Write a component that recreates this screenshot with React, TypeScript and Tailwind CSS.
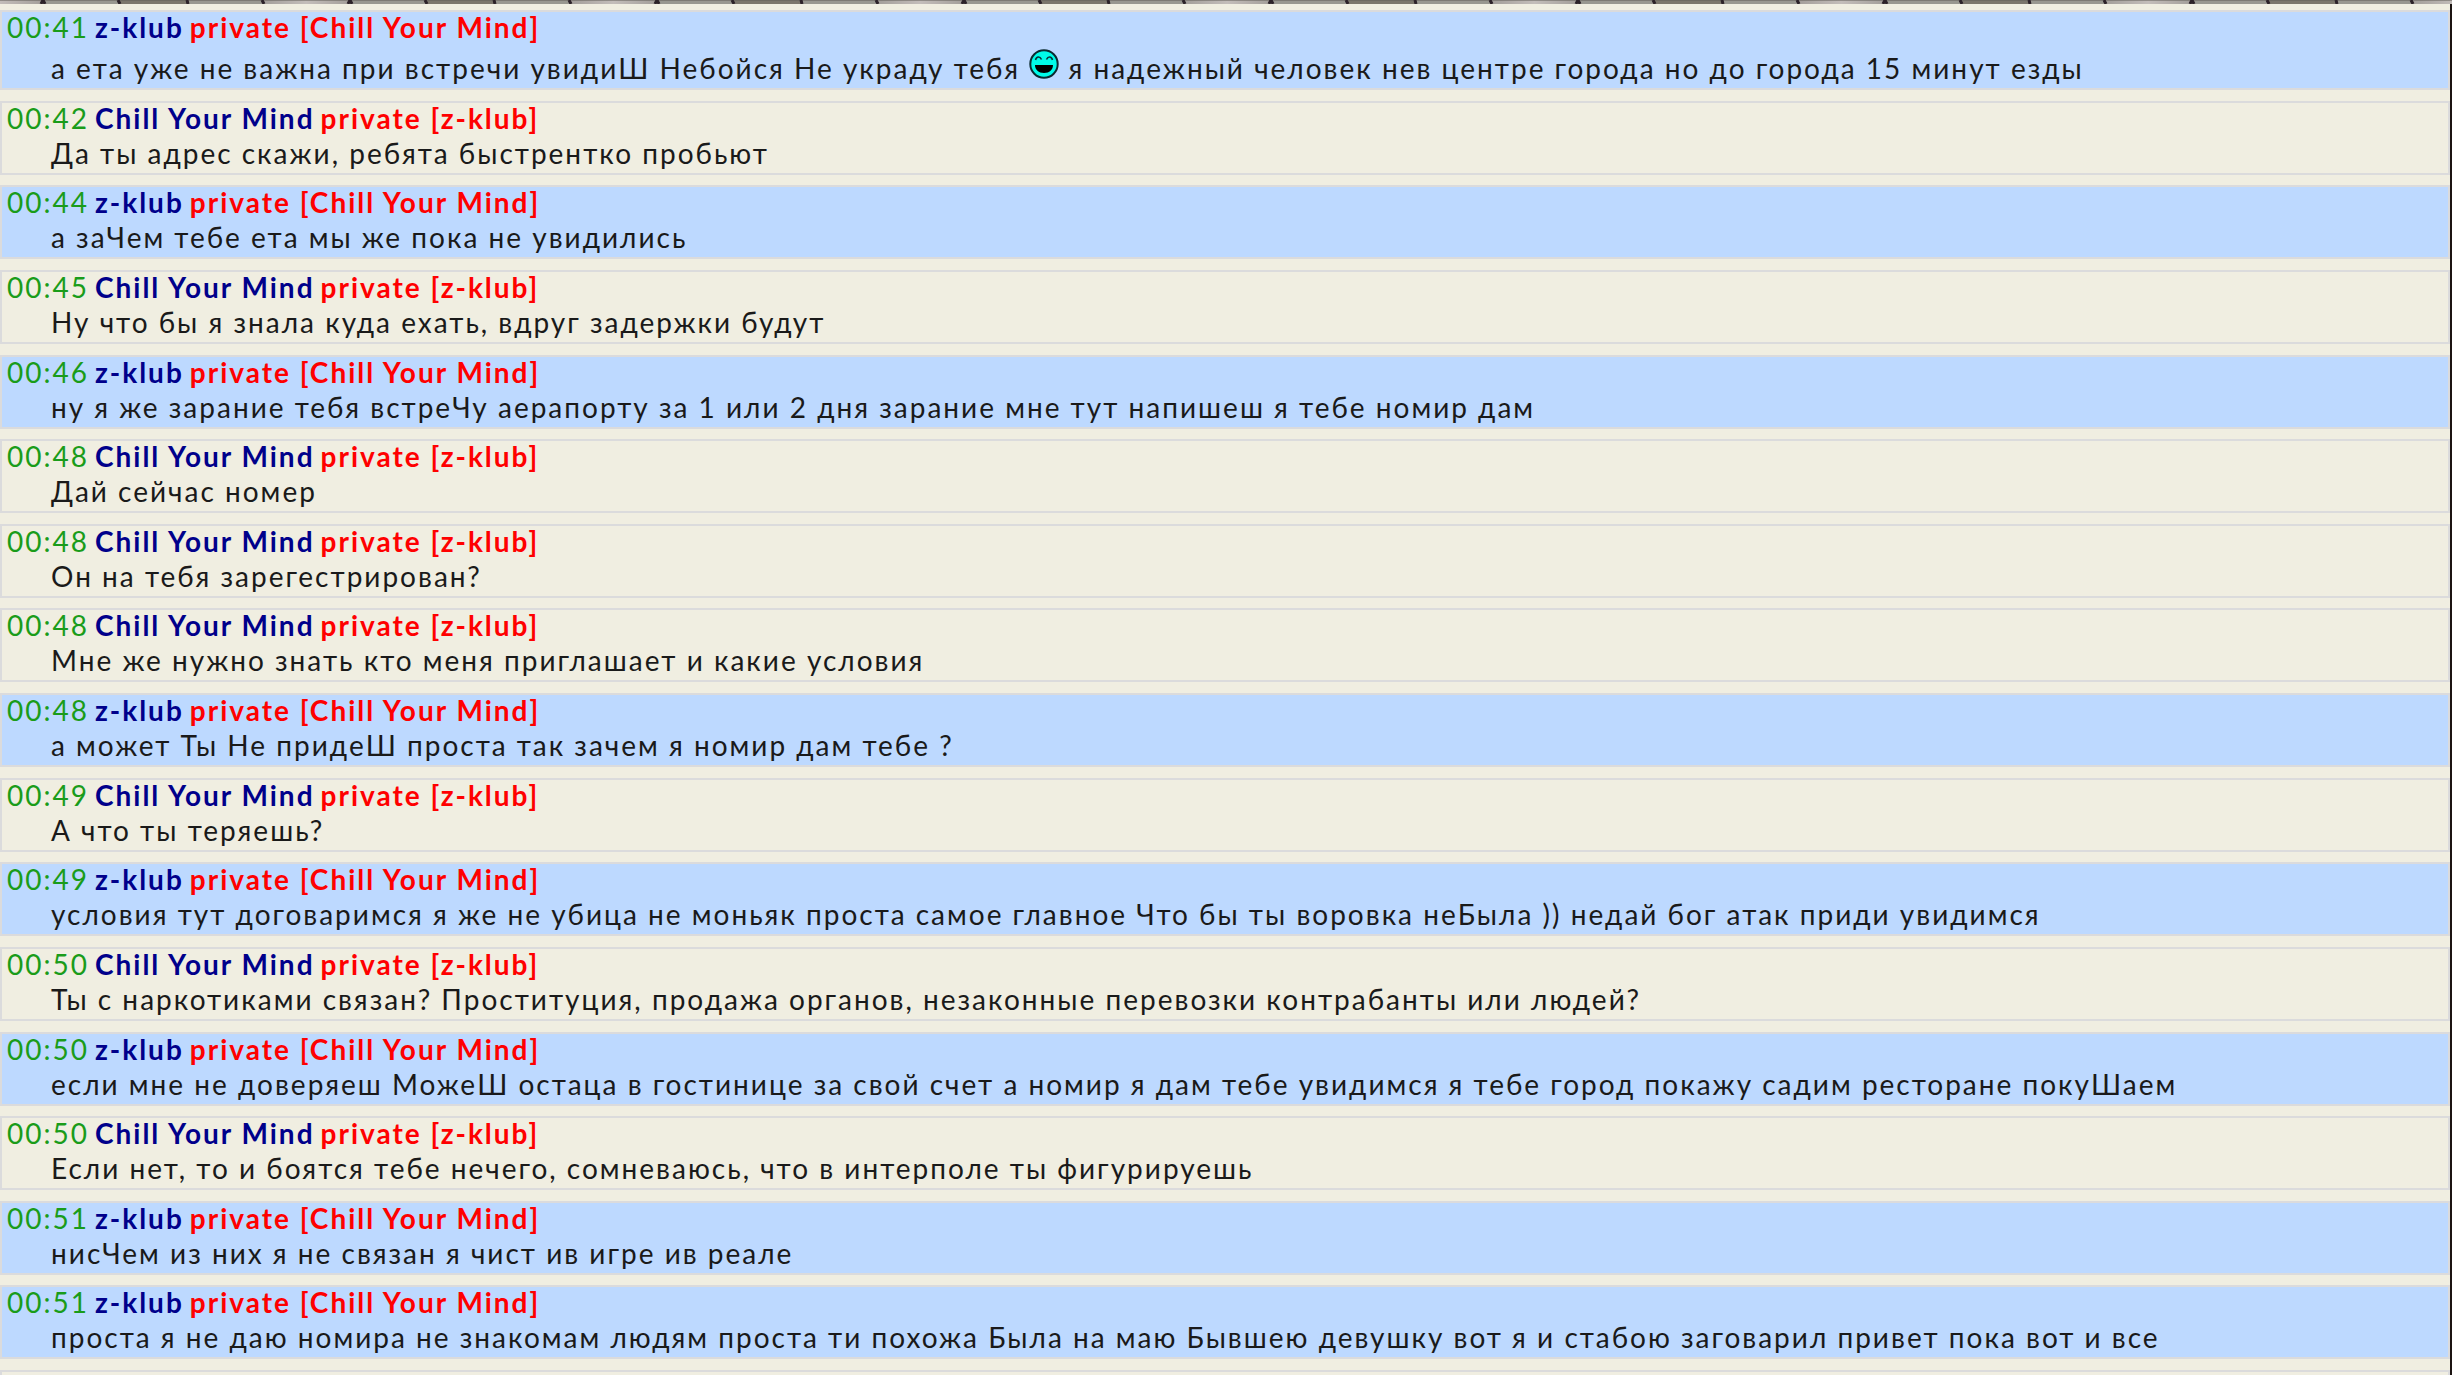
import { Fragment } from 'react';

const GUEST = 'z-klub';
const HOST = 'Chill Your Mind';

interface Message {
  time: string;
  from: string;
  text: string;
}

const messages: Message[] = [
  { time: '00:41', from: GUEST, text: 'а ета уже не важна при встречи увидиШ Небойся Не украду тебя :D я надежный человек нев центре города но до города 15 минут езды' },
  { time: '00:42', from: HOST, text: 'Да ты адрес скажи, ребята быстрентко пробьют' },
  { time: '00:44', from: GUEST, text: 'а заЧем тебе ета мы же пока не увидились' },
  { time: '00:45', from: HOST, text: 'Ну что бы я знала куда ехать, вдруг задержки будут' },
  { time: '00:46', from: GUEST, text: 'ну я же зарание тебя встреЧу аерапорту за 1 или 2 дня зарание мне тут напишеш я тебе номир дам' },
  { time: '00:48', from: HOST, text: 'Дай сейчас номер' },
  { time: '00:48', from: HOST, text: 'Он на тебя зарегестрирован?' },
  { time: '00:48', from: HOST, text: 'Мне же нужно знать кто меня приглашает и какие условия' },
  { time: '00:48', from: GUEST, text: 'а может Ты Не придеШ проста так зачем я номир дам тебе ?' },
  { time: '00:49', from: HOST, text: 'А что ты теряешь?' },
  { time: '00:49', from: GUEST, text: 'условия тут договаримся я же не убица не моньяк проста самое главное Что бы ты воровка неБыла )) недай бог атак приди увидимся' },
  { time: '00:50', from: HOST, text: 'Ты с наркотиками связан? Проституция, продажа органов, незаконные перевозки контрабанты или людей?' },
  { time: '00:50', from: GUEST, text: 'если мне не доверяеш МожеШ остаца в гостинице за свой счет а номир я дам тебе увидимся я тебе город покажу садим ресторане покуШаем' },
  { time: '00:50', from: HOST, text: 'Если нет, то и боятся тебе нечего, сомневаюсь, что в интерполе ты фигурируешь' },
  { time: '00:51', from: GUEST, text: 'нисЧем из них я не связан я чист ив игре ив реале' },
  { time: '00:51', from: GUEST, text: 'проста я не даю номира не знакомам людям проста ти похожа Была на маю Бывшею девушку вот я и стабою заговарил привет пока вот и все' },
];

// Bottom edge of the stone wall behind the chat
function StoneEdge() {
  return (
    <svg className="block h-1 w-full" aria-hidden="true">
      <defs>
        <linearGradient id="arch">
          <stop offset="0" stopColor="#a39e9a" />
          <stop offset="0.5" stopColor="#c3bdba" />
          <stop offset="1" stopColor="#a39e9a" />
        </linearGradient>
        <pattern id="stones" x="43" width="307" height="4" patternUnits="userSpaceOnUse">
          <rect width="307" height="4" fill="#989790" />
          <rect x="76" width="68" height="4" fill="#7b766c" />
          <rect x="220" width="87" height="4" fill="url(#arch)" />
          <rect width="307" height="1" fill="#5f5b55" opacity="0.5" />
          <path d="M0 0 L2 4 M75 0 L77 4 M144 0 L145 4 M219 0 L221 4 M307 0 L305 4" stroke="#2c2229" strokeWidth="3" />
        </pattern>
      </defs>
      <rect width="100%" height="4" fill="url(#stones)" />
    </svg>
  );
}

function LaughIcon() {
  return (
    <svg viewBox="0 0 30 30" className="mt-[7px] inline-block size-[30px] align-baseline" role="img" aria-label=":D">
      <circle cx="15" cy="15" r="13.7" fill="#00fbe8" stroke="#0b2a30" strokeWidth="2" />
      <path d="M6.5 11 C7.5 7 11 7 12.5 10.5 M17.5 10.5 C19 7 22.5 7 23.5 11" fill="none" stroke="#06373c" strokeWidth="1.6" />
      <path d="M6 16 H24 C24 20.5 20.5 24 15 24 C9.5 24 6 20.5 6 16 Z" fill="#000" />
    </svg>
  );
}

function MessageText({ text }: { text: string }) {
  return (
    <p className="pl-[49px] leading-10">
      {text.split(':D').map((part, index) => (
        <Fragment key={index}>
          {index > 0 && <LaughIcon />}
          {part}
        </Fragment>
      ))}
    </p>
  );
}

export default function App() {
  return (
    <div className="flex min-h-screen flex-col bg-[#f0eee1] font-['Lato','Carlito',sans-serif] text-[28px] tracking-[2px] text-[#1a1a1a]">
      <StoneEdge />
      <main className="flex flex-1 flex-col border-r-2 border-[#1c1412] pt-1.5">
        <ul className="flex flex-1 flex-col justify-between">
          {messages.map((message, index) => (
            <li
              key={index}
              className={`border-2 border-[#dbdbdc] ${message.from === GUEST ? 'bg-[#bdd9ff]' : 'bg-[#f0eee1]'}`}
            >
              <div className="flex gap-1.5 pl-[5px] leading-[30px]">
                <time className="text-[#1a9c1a]">{message.time}</time>
                <b className="text-[#00008b]">{message.from}</b>
                <b className="text-[#ff0000]">private [{message.from === GUEST ? HOST : GUEST}]</b>
              </div>
              <MessageText text={message.text} />
            </li>
          ))}
          <li className="h-[5px] border-2 border-b-0 border-[#dbdbdc]" />
        </ul>
      </main>
    </div>
  );
}
